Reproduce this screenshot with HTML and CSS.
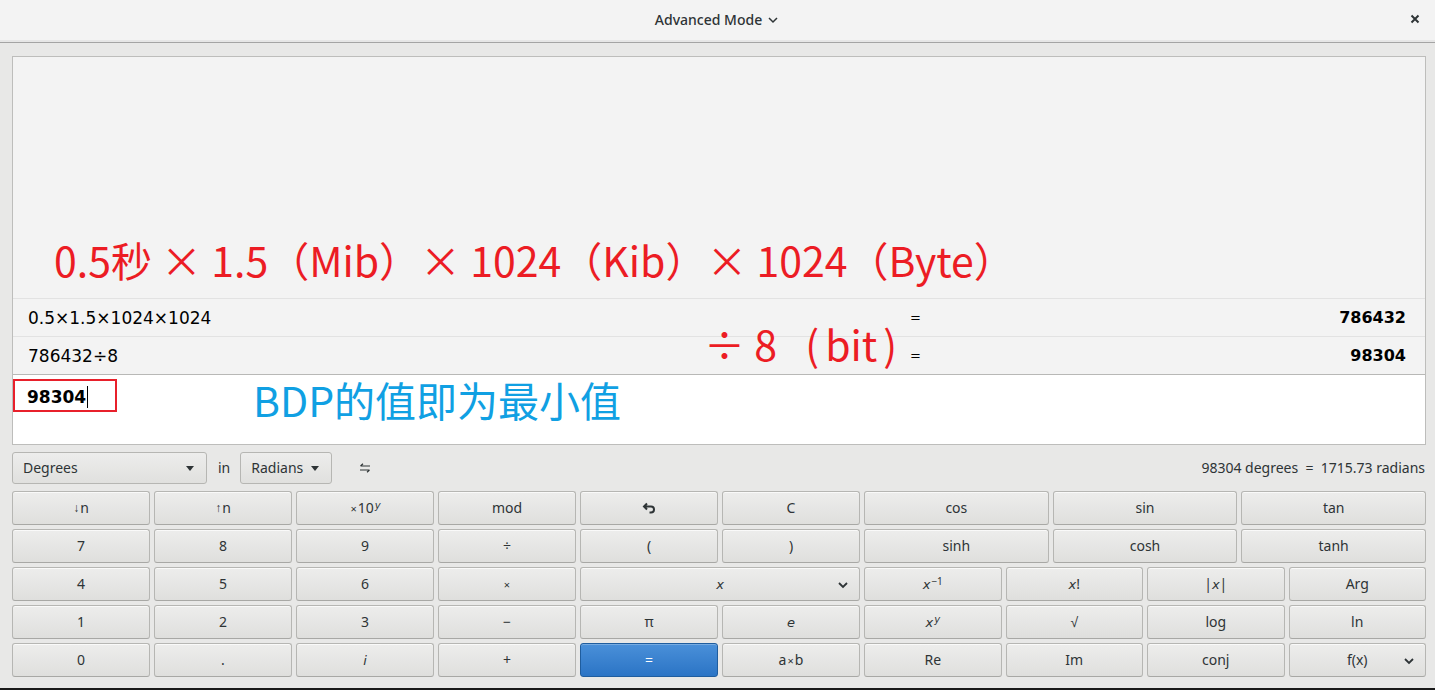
FILE: index.html
```html
<!DOCTYPE html>
<html lang="zh">
<head>
<meta charset="utf-8">
<title>Calculator</title>
<link rel="stylesheet" href="styles.css">
</head>
<body>
<div class="window">
  <header class="titlebar">
    <div class="title">Advanced Mode
      <svg class="title-chev" width="10" height="8" viewBox="0 0 10 8"><path d="M1 2 L5 6 L9 2" fill="none" stroke="#2e3436" stroke-width="1.5"/></svg>
    </div>
    <div class="close">
      <svg width="10" height="10" viewBox="0 0 10 10"><path d="M1.5 1.5 L8.5 8.5 M8.5 1.5 L1.5 8.5" stroke="#2e3436" stroke-width="2"/></svg>
    </div>
  </header>

  <main class="content">
    <section class="display">
      <div class="history">
        <div class="annot annot-red annot-1">0.5秒 × 1.5（Mib）× 1024（Kib）× 1024（Byte）</div>
        <div class="hrow">
          <span class="expr">0.5×1.5×1024×1024</span>
          <span class="eq">=</span>
          <span class="res">786432</span>
        </div>
        <div class="hrow">
          <span class="expr">786432÷8</span>
          <span class="eq">=</span>
          <span class="res">98304</span>
        </div>
        <div class="annot annot-red annot-2">÷ 8&nbsp;&nbsp;<span class="par-l">(</span>bit<span class="par-r">)</span></div>
      </div>
      <div class="entry">
        <span class="input">98304<span class="caret"></span></span>
        <span class="markbox"></span>
        <span class="annot annot-blue">BDP的值即为最小值</span>
      </div>
    </section>

    <div class="convbar">
      <div class="combo combo-wide"><span>Degrees</span><span class="tri"></span></div>
      <span class="in">in</span>
      <div class="combo combo-narrow"><span>Radians</span><span class="tri"></span></div>
      <span class="swap">
        <svg width="12" height="10" viewBox="0 0 12 10"><path d="M11 3 H1.5 M1.5 3 L4 0.8 M1 7 H10.5 M10.5 7 L8 9.2" fill="none" stroke="#2e3436" stroke-width="1.2"/></svg>
      </span>
      <span class="conv-result">98304 degrees  =  1715.73 radians</span>
    </div>

    <div class="keypad">
      <div class="pad-left">
        <button class="key"><span class="arr">↓</span>n</button>
        <button class="key"><span class="arr">↑</span>n</button>
        <button class="key"><span class="small">×</span>10<sup><i>y</i></sup></button>
        <button class="key">mod</button>
        <button class="key">
          <svg width="14" height="12" viewBox="0 0 14 12"><path d="M5 1.5 L2 4.5 L5 7.5 M2.5 4.5 H9 A3 3 0 0 1 9 10.5 H7.5" fill="none" stroke="#2e3436" stroke-width="2"/></svg>
        </button>
        <button class="key">C</button>

        <button class="key">7</button>
        <button class="key">8</button>
        <button class="key">9</button>
        <button class="key">÷</button>
        <button class="key">(</button>
        <button class="key">)</button>

        <button class="key">4</button>
        <button class="key">5</button>
        <button class="key">6</button>
        <button class="key"><span class="small">×</span></button>
        <button class="key key-span2"><i>x</i>
          <svg class="chev" width="12" height="8" viewBox="0 0 12 8"><path d="M2 2 L6 6 L10 2" fill="none" stroke="#2e3436" stroke-width="1.8"/></svg>
        </button>

        <button class="key">1</button>
        <button class="key">2</button>
        <button class="key">3</button>
        <button class="key">−</button>
        <button class="key">π</button>
        <button class="key"><i>e</i></button>

        <button class="key">0</button>
        <button class="key">.</button>
        <button class="key"><i>i</i></button>
        <button class="key">+</button>
        <button class="key key-blue">=</button>
        <button class="key">a<span class="small">×</span>b</button>
      </div>

      <div class="pad-right">
        <button class="key w3">cos</button>
        <button class="key w3">sin</button>
        <button class="key w3">tan</button>

        <button class="key w3">sinh</button>
        <button class="key w3">cosh</button>
        <button class="key w3">tanh</button>

        <button class="key w4"><i>x</i><sup>−1</sup></button>
        <button class="key w4"><i>x</i>!</button>
        <button class="key w4">|<i>x</i>|</button>
        <button class="key w4">Arg</button>

        <button class="key w4"><i>x</i><sup><i>y</i></sup></button>
        <button class="key w4">√</button>
        <button class="key w4">log</button>
        <button class="key w4">ln</button>

        <button class="key w4">Re</button>
        <button class="key w4">Im</button>
        <button class="key w4">conj</button>
        <button class="key w4 key-menu">f(x)
          <svg class="chev" width="12" height="8" viewBox="0 0 12 8"><path d="M2 2 L6 6 L10 2" fill="none" stroke="#2e3436" stroke-width="1.8"/></svg>
        </button>
      </div>
    </div>
  </main>
</div>
</body>
</html>
```

FILE: styles.css
```css
* { box-sizing: border-box; }

html, body {
  margin: 0;
  padding: 0;
  width: 1435px;
  height: 690px;
  overflow: hidden;
  background: #e8e8e7;
  font-family: "Noto Sans", "DejaVu Sans", sans-serif;
  color: #2e3436;
}

.window {
  width: 1435px;
  height: 690px;
  display: flex;
  flex-direction: column;
  border-bottom: 2px solid #1a1a1a;
}

.titlebar {
  height: 43px;
  flex: none;
  background: #f3f3f3;
  border-bottom: 1px solid #a4a4a4;
  box-shadow: inset 0 -2px 0 #e6e6e6;
  display: flex;
  align-items: center;
  justify-content: center;
  position: relative;
}

.title {
  font-size: 14px;
  font-weight: 500;
  color: #2e3436;
  display: flex;
  align-items: center;
  gap: 6px;
  margin-left: -2px;
  margin-top: -3px;
}

.close {
  position: absolute;
  right: 15px;
  top: 14px;
  width: 10px;
  height: 10px;
  display: flex;
}

.content {
  flex: 1;
  padding: 13px 9px 0 12px;
  display: flex;
  flex-direction: column;
}

/* display */
.display {
  height: 389px;
  border: 1px solid #bdbdbb;
  background: #f3f3f3;
  display: flex;
  flex-direction: column;
  position: relative;
}

.history {
  flex: 1;
  display: flex;
  flex-direction: column;
  justify-content: flex-end;
  position: relative;
  border-bottom: 1px solid #b8b8b6;
}

.hrow {
  height: 38px;
  border-top: 1px solid #e2e2e2;
  display: grid;
  grid-template-columns: 882px auto 1fr;
  align-items: center;
  padding: 0 19px 0 15px;
  font-family: "DejaVu Sans", sans-serif;
  color: #000;
}

.expr { font-size: 17px; }
.eq { font-size: 13px; }
.res {
  text-align: right;
  font-weight: bold;
  font-size: 16px;
}

.entry {
  height: 69px;
  background: #ffffff;
  position: relative;
  padding: 8px 0 0 14px;
}

.input {
  font-family: "DejaVu Sans", sans-serif;
  font-weight: bold;
  font-size: 17px;
  color: #000;
  display: inline-flex;
  align-items: center;
  height: 27px;
}

.caret {
  display: inline-block;
  width: 1px;
  height: 22px;
  background: #000;
  margin-left: 1px;
}

.markbox {
  position: absolute;
  left: 0;
  top: 4px;
  width: 104px;
  height: 33px;
  border: 2px solid #e8202b;
}

.annot {
  position: absolute;
  font-family: "Noto Sans CJK SC", "Noto Sans", sans-serif;
  font-size: 41px;
  line-height: 48px;
  white-space: nowrap;
}

.annot-red { color: #ec1c24; }

.annot-1 { left: 41px; top: 178px; }
.annot-2 { left: 691px; top: 262px; }

.par-l { margin: 0 6px 0 10px; }
.par-r { margin-left: 6px; }

.annot-blue {
  color: #10a0e3;
  left: 240px;
  top: 0px;
}

/* conversion bar */
.convbar {
  margin-top: 7px;
  height: 32px;
  display: flex;
  align-items: center;
  font-size: 14px;
}

.combo {
  height: 32px;
  border: 1px solid #b6b6b3;
  border-radius: 3px;
  background: linear-gradient(#ededec, #e0e0de);
  display: flex;
  align-items: center;
  justify-content: space-between;
  padding: 0 12px 0 10px;
}

.combo span:first-child { margin-top: -2px; }

.combo-wide { width: 195px; }
.combo-narrow { width: 92px; }

.tri {
  width: 0;
  height: 0;
  border-left: 4.5px solid transparent;
  border-right: 4.5px solid transparent;
  border-top: 5px solid #2e3436;
}

.in { margin: -2px 10px 0 11px; }

.swap {
  margin-left: 27px;
  display: flex;
}

.conv-result {
  margin-left: auto;
  white-space: pre;
  margin-right: 1px;
  margin-top: -2px;
}

/* keypad */
.keypad {
  margin-top: 7px;
  display: grid;
  grid-template-columns: 848fr 562fr;
  gap: 4px;
}

.pad-left {
  display: grid;
  grid-template-columns: repeat(6, 1fr);
  grid-auto-rows: 34px;
  gap: 4px;
}

.pad-right {
  display: grid;
  grid-template-columns: repeat(12, 1fr);
  grid-auto-rows: 34px;
  gap: 4px;
}

.w3 { grid-column: span 4; }
.w4 { grid-column: span 3; }
.key-span2 { grid-column: span 2; }

.key {
  font-family: "Noto Sans", sans-serif;
  font-size: 14px;
  color: #2e3436;
  border: 1px solid #b6b6b3;
  border-bottom-color: #a8a8a5;
  border-radius: 3px;
  background: linear-gradient(#ededec, #dfdfdd);
  box-shadow: inset 0 1px 0 rgba(255,255,255,0.7);
  display: flex;
  align-items: center;
  justify-content: center;
  padding: 0;
  position: relative;
  line-height: 1;
}

.key sup {
  font-size: 10px;
  margin-left: 1px;
  position: relative;
  top: -3px;
  vertical-align: top;
}

.small { font-size: 11px; margin: 0 1px; }
.arr { font-size: 12px; margin-right: 1px; }

.key i { font-family: "DejaVu Sans", sans-serif; font-size: 13px; }
.key sup i { font-size: 10px; }

.key-blue {
  background: linear-gradient(#4a90d9, #2b74c5);
  border-color: #1f5d9e;
  color: #ffffff;
  box-shadow: inset 0 1px 0 rgba(255,255,255,0.25);
}

.chev {
  position: absolute;
  right: 10px;
  top: 13px;
}
```
